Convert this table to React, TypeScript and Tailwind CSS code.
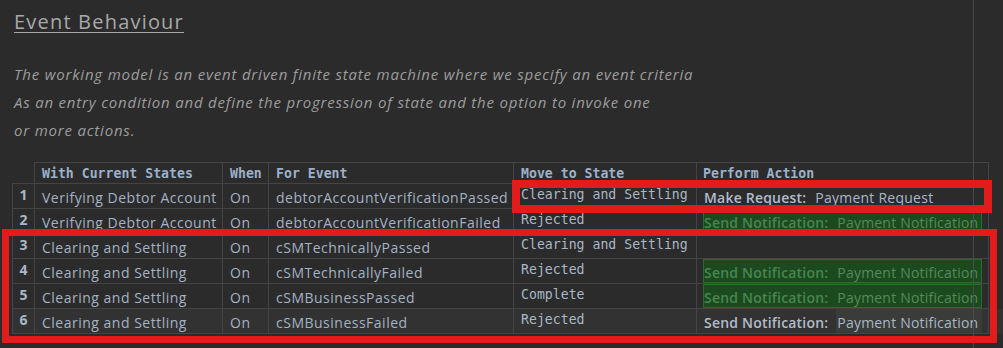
import React from "react";

type Action =
  | { kind: "plain"; label: string; value: string }
  | { kind: "green"; label: string; value: string }
  | { kind: "partial"; label: string; value: string }
  | null;

type Row = {
  n: number;
  state: string;
  when: string;
  event: string;
  move: string;
  action: Action;
  highlight?: boolean;
};

const rows: Row[] = [
  {
    n: 1,
    state: "Verifying Debtor Account",
    when: "On",
    event: "debtorAccountVerificationPassed",
    move: "Clearing and Settling",
    action: { kind: "plain", label: "Make Request:", value: "Payment Request" },
  },
  {
    n: 2,
    state: "Verifying Debtor Account",
    when: "On",
    event: "debtorAccountVerificationFailed",
    move: "Rejected",
    action: { kind: "green", label: "Send Notification:", value: "Payment Notification" },
  },
  {
    n: 3,
    state: "Clearing and Settling",
    when: "On",
    event: "cSMTechnicallyPassed",
    move: "Clearing and Settling",
    action: null,
  },
  {
    n: 4,
    state: "Clearing and Settling",
    when: "On",
    event: "cSMTechnicallyFailed",
    move: "Rejected",
    action: { kind: "green", label: "Send Notification:", value: "Payment Notification" },
  },
  {
    n: 5,
    state: "Clearing and Settling",
    when: "On",
    event: "cSMBusinessPassed",
    move: "Complete",
    action: { kind: "green", label: "Send Notification:", value: "Payment Notification" },
  },
  {
    n: 6,
    state: "Clearing and Settling",
    when: "On",
    event: "cSMBusinessFailed",
    move: "Rejected",
    action: { kind: "partial", label: "Send Notification:", value: "Payment Notification" },
    highlight: true,
  },
];

const sans = "font-['Open_Sans',sans-serif]";
const mono = "font-['DejaVu_Sans_Mono',monospace]";
const line = "border-[#444444]";

function ActionCell({ action }: { action: Action }) {
  if (!action) return null;
  if (action.kind === "green") {
    return (
      <div className="flex h-full min-w-0 flex-1 overflow-hidden whitespace-nowrap border border-[#2a6a2d] bg-[#1c4a1f] pt-[4px] text-[14px] leading-[18px]">
        <span className="font-semibold tracking-[0.2px] text-[#478650]">{action.label}</span>
        <span className="ml-[9px] tracking-[0.2px] text-[#538a59]">{action.value}</span>
      </div>
    );
  }
  if (action.kind === "partial") {
    return (
      <div className="flex h-full min-w-0 flex-1 overflow-hidden whitespace-nowrap text-[14px] leading-[18px]">
        <span className="pl-[1px] pt-[5px] font-semibold tracking-[0.2px] text-[#b2bccb]">{action.label}</span>
        <span className="ml-[8px] min-w-0 flex-1 bg-[#393c39] pl-[1px] pt-[5px] tracking-[0.2px] text-[#a9b7c6]">{action.value}</span>
      </div>
    );
  }
  return (
    <div className="flex h-full min-w-0 flex-1 overflow-hidden whitespace-nowrap pl-[1px] pt-[5px] text-[14px] leading-[18px]">
      <span className="font-semibold tracking-[0.2px] text-[#b2bccb]">{action.label}</span>
      <span className="ml-[9px] tracking-[0.25px] text-[#a9b7c6]">{action.value}</span>
    </div>
  );
}

export default function App() {
  return (
    <div className={`relative h-[348px] w-[1003px] overflow-hidden bg-[#2b2b2b] ${sans}`}>
      <div className="pl-[12px]">
        <h1 className="ml-[2px] pt-[8px] text-[20px] leading-[28px] tracking-[1.2px] text-[#a8a8a8] underline decoration-1 underline-offset-[3px]">
          Event Behaviour
        </h1>
        <div className="ml-[2px] mt-[24px] text-[15px] italic leading-[28px] tracking-[0.8px] text-[#9d9d9d]">
          <div>The working model is an event driven finite state machine where we specify an event criteria</div>
          <div>As an entry condition and define the progression of state and the option to invoke one</div>
          <div>or more actions.</div>
        </div>

        <div className="mt-[18px] flex flex-col">
          {/* header */}
          <div className={`flex h-[22px] ${mono} text-[13.2px] font-bold leading-[16px] text-[#9cb0c9]`}>
            <div className={`w-[23px] border-b border-r ${line}`} />
            <div className={`w-[188px] border-y border-r ${line} pl-[7px] pt-[3px]`}>With Current States</div>
            <div className={`w-[46px] border-y border-r ${line} pl-[7px] pt-[3px]`}>When</div>
            <div className={`w-[245px] border-y border-r ${line} pl-[7px] pt-[3px]`}>For Event</div>
            <div className={`w-[183px] border-y border-r ${line} pl-[7px] pt-[3px]`}>Move to State</div>
            <div className={`w-[292px] border-y border-r ${line} pl-[6px] pt-[3px]`}>Perform Action</div>
          </div>
          {rows.map((r) => (
            <div
              key={r.n}
              className={`flex h-[25px] ${r.highlight ? "bg-[#323232]" : ""}`}
            >
              <div className={`w-[23px] shrink-0 border-x border-b ${line} pt-[2px] text-center text-[14px] font-bold leading-[18px] text-[#a9b7c6]`}>
                {r.n}
              </div>
              <div className={`w-[188px] shrink-0 border-b border-r ${line} whitespace-nowrap pl-[7px] pt-[5px] text-[14px] leading-[18px] tracking-[0.5px] text-[#a3b2c4]`}>
                {r.state}
              </div>
              <div className={`w-[46px] shrink-0 border-b border-r ${line} pl-[7px] pt-[5px] text-[14px] leading-[18px] tracking-[0.5px] text-[#a3b2c4]`}>
                {r.when}
              </div>
              <div className={`w-[245px] shrink-0 border-b border-r ${line} whitespace-nowrap pl-[7px] pt-[5px] text-[14px] leading-[18px] tracking-[0.5px] text-[#a3b2c4]`}>
                {r.event}
              </div>
              <div className={`w-[183px] shrink-0 border-b border-r ${line} whitespace-nowrap pl-[7px] pt-[3px] ${mono} text-[13.2px] leading-[16px] text-[#a9b7c6]`}>
                {r.move}
              </div>
              <div className={`flex w-[292px] shrink-0 border-b border-r ${line} px-[6px]`}>
                <ActionCell action={r.action} />
              </div>
            </div>
          ))}
        </div>
      </div>

      {/* editor right-margin guide */}
      <div className="pointer-events-none absolute bottom-0 left-[973px] top-0 w-px bg-[#4a4a4a]" />

      {/* annotation boxes */}
      <div className="pointer-events-none absolute left-[512px] top-[180px] h-[33px] w-[480px] border-[8px] border-[#e21b1d]" />
      <div className="pointer-events-none absolute left-[2px] top-[229px] h-[114px] w-[995px] border-[7px] border-[#e21b1d]" />
    </div>
  );
}
